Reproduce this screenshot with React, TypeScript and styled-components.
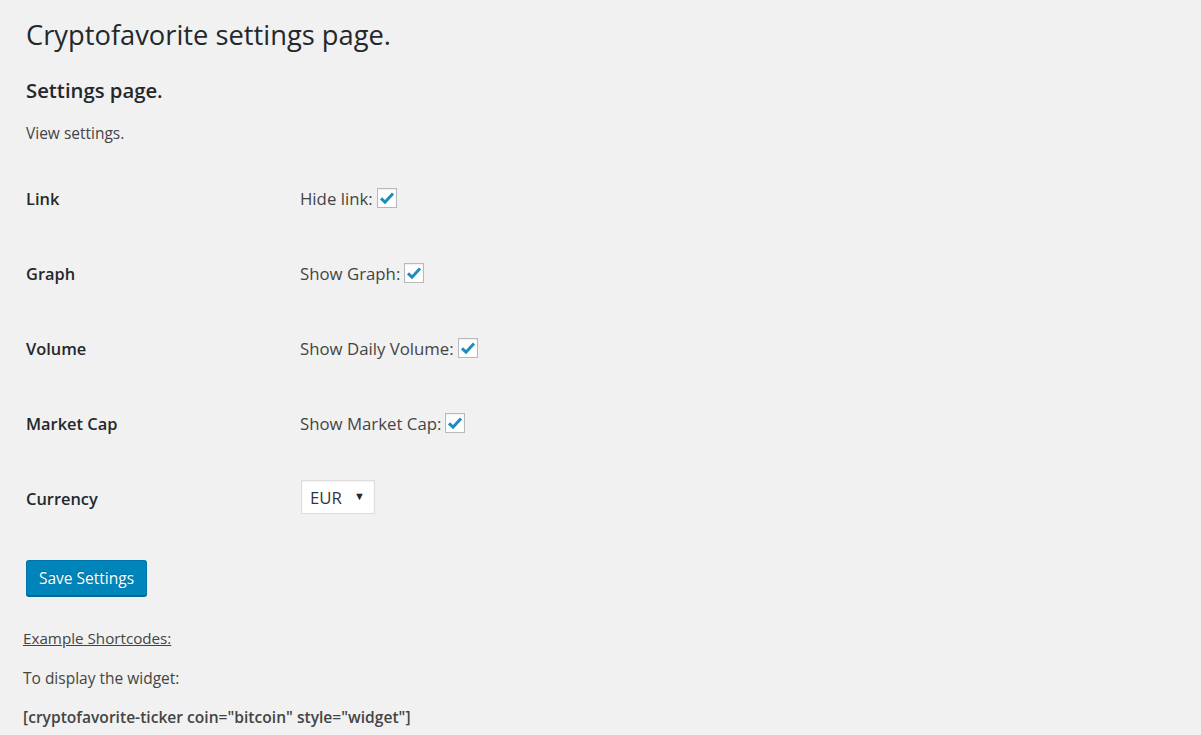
import React from "react";
import styled, { createGlobalStyle } from "styled-components";

const Global = createGlobalStyle`
  html, body { margin: 0; padding: 0; background: #f1f1f1; }
  body { font-family: "Open Sans", "Noto Sans", sans-serif; color: #444; }
`;

const Page = styled.div`
  display: flex;
  flex-direction: column;
  padding: 17px 0 0 26px;
  min-height: 735px;
  box-sizing: border-box;
`;

const Title = styled.h1`
  margin: 0;
  font-size: 27.3px;
  font-weight: 400;
  line-height: 36px;
  color: #23282d;
`;

const SubTitle = styled.h2`
  margin: 23px 0 0;
  font-size: 20.3px;
  font-weight: 600;
  line-height: 28px;
  color: #23282d;
`;

const Text = styled.p<{ $top?: number }>`
  margin: ${(p) => p.$top ?? 0}px 0 0;
  font-size: 15.5px;
  line-height: 24px;
  color: #444;
`;

const Table = styled.div`
  margin-top: 16px;
  display: grid;
  grid-template-columns: 274px 1fr;
  grid-auto-rows: 75px;
`;

const Label = styled.div`
  display: flex;
  align-items: center;
  font-size: 16.4px;
  font-weight: 600;
  color: #23282d;
`;

const Field = styled.div`
  display: flex;
  align-items: center;
  gap: 4px;
  font-size: 16.8px;
  color: #444;
`;

const Box = styled.span`
  display: inline-flex;
  align-items: center;
  justify-content: center;
  width: 18px;
  height: 18px;
  background: #fff;
  border: 1px solid #b4b9be;
  box-shadow: inset 0 1px 2px rgba(0, 0, 0, 0.07);
  margin-top: -1px;
`;

const Select = styled.div`
  display: flex;
  align-items: center;
  justify-content: space-between;
  box-sizing: border-box;
  width: 74px;
  height: 34px;
  margin-left: 1px;
  margin-top: -3px;
  padding: 0 9px 0 8px;
  background: #fff;
  border: 1px solid #ddd;
  box-shadow: inset 0 1px 2px rgba(0, 0, 0, 0.07);
  font-size: 16.8px;
  color: #32373c;
`;

const Arrow = styled.span`
  font-size: 11px;
  color: #23282d;
  margin-top: -3px;
`;

const Button = styled.button`
  align-self: flex-start;
  margin: 24px 0 0 0;
  height: 36px;
  padding: 0 12px;
  background: #0085ba;
  border: 1px solid #0073aa;
  border-bottom-color: #006799;
  border-radius: 3px;
  box-shadow: 0 1px 0 #006799;
  color: #fff;
  font-family: inherit;
  font-size: 15.5px;
  text-shadow: 0 -1px 1px #006799;
`;

const Shortcodes = styled.div`
  display: flex;
  flex-direction: column;
  margin: 30px 0 0 -3px;
`;

const Underlined = styled.span`
  font-size: 15.2px;
  line-height: 24px;
  text-decoration: underline;
  color: #444;
`;

const Code = styled.p`
  margin: 15px 0 0;
  font-size: 15.6px;
  font-weight: 600;
  line-height: 24px;
  color: #444;
`;

const Check = () => (
  <Box>
    <svg width="18" height="18" viewBox="0 0 18 18">
      <path d="M3 9.4 L7 13.2 L15 4.4" fill="none" stroke="#1e8cbe" strokeWidth="3" />
    </svg>
  </Box>
);

const rows = [
  { label: "Link", text: "Hide link:" },
  { label: "Graph", text: "Show Graph:" },
  { label: "Volume", text: "Show Daily Volume:" },
  { label: "Market Cap", text: "Show Market Cap:" },
];

export default function App() {
  return (
    <>
      <Global />
      <Page>
        <Title>Cryptofavorite settings page.</Title>
        <SubTitle>Settings page.</SubTitle>
        <Text $top={17}>View settings.</Text>
        <Table>
          {rows.map((r) => (
            <React.Fragment key={r.label}>
              <Label>{r.label}</Label>
              <Field>
                {r.text}
                <Check />
              </Field>
            </React.Fragment>
          ))}
          <Label>Currency</Label>
          <Field>
            <Select>
              EUR
              <Arrow>▼</Arrow>
            </Select>
          </Field>
        </Table>
        <Button>Save Settings</Button>
        <Shortcodes>
          <Underlined>Example Shortcodes:</Underlined>
          <Text $top={16}>To display the widget:</Text>
          <Code>[cryptofavorite-ticker coin="bitcoin" style="widget"]</Code>
        </Shortcodes>
      </Page>
    </>
  );
}
